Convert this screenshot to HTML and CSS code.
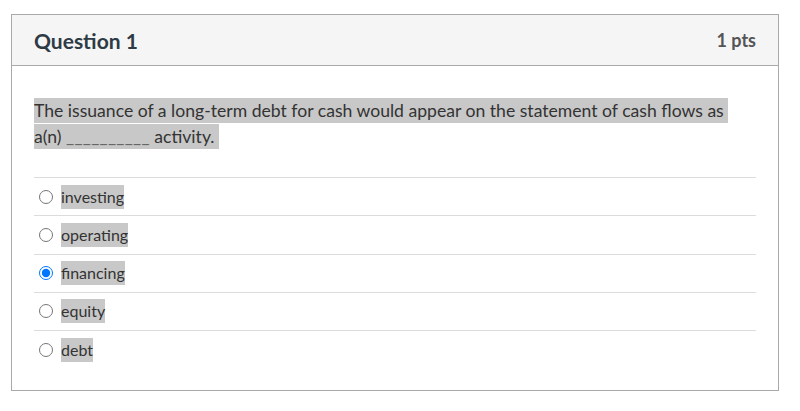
FILE: index.html
```html
<!DOCTYPE html>
<html lang="en">
<head>
    <link rel="stylesheet" href="styles.css">
    <meta charset="UTF-8">
    <meta name="viewport" content="width=device-width, initial-scale=1.0">
    <title>Quiz - Question 1</title>
</head>
<body>
    <div class="question">
        <div class="question_header">
            <h2 class="question_name">Question 1</h2>
            <span class="question_points">1 pts</span>
        </div>
        <div class="question_body">
            <p class="question_text"><span class="hl">The issuance of a long-term debt for cash would appear on the statement of cash flows as&nbsp;</span><br><span class="hl">a(n) <span class="blank">__________</span> activity.&nbsp;</span></p>
            <ul class="answers">
                <li class="answer"><input type="radio" name="q1" id="a1"><label for="a1"><span class="hl">investing </span></label></li>
                <li class="answer"><input type="radio" name="q1" id="a2"><label for="a2"><span class="hl">operating </span></label></li>
                <li class="answer"><input type="radio" name="q1" id="a3" checked><label for="a3"><span class="hl">financing </span></label></li>
                <li class="answer"><input type="radio" name="q1" id="a4"><label for="a4"><span class="hl">equity </span></label></li>
                <li class="answer"><input type="radio" name="q1" id="a5"><label for="a5"><span class="hl">debt</span></label></li>
            </ul>
        </div>
    </div>
</body>
</html>
```

FILE: styles.css
```css
body {
    margin: 0;
    padding: 0;
    background: #fff;
    font-family: Lato, "Noto Sans", sans-serif;
    color: #2d3b45;
}
.question {
    box-sizing: border-box;
    width: 768px;
    margin: 14px 0 0 11px;
    border: 1px solid #a9a9a9;
}
.question_header {
    height: 50px;
    padding: 0 22px;
    display: flex;
    align-items: center;
    justify-content: space-between;
    background-color: #f5f5f5;
    border-bottom: 1px solid #a9a9a9;
}
.question_name {
    margin: 0;
    font-size: 21px;
    font-weight: 700;
    color: #2d3b45;
}
.question_points {
    font-size: 18px;
    font-weight: 700;
    color: #555;
}
.question_body {
    padding: 32px 22px 22px 22px;
}
.question_text {
    margin: 0;
    font-size: 17.6px;
    line-height: 26px;
    color: #333;
}
.hl {
    background-color: #c8c8c8;
    padding: 2.45px 0;
}
.question_text .blank {
    color: #666;
    letter-spacing: 0.3px;
}
.answers {
    list-style: none;
    margin: 27px 0 0 0;
    padding: 0;
}
.answer {
    height: 37.25px;
    display: flex;
    align-items: center;
    border-top: 1px solid #dcdcdc;
    font-size: 16px;
    color: #333;
}
.answer input {
    margin: 0 8px 0 5px;
    width: 14px;
    height: 14px;
}
.answer .hl {
    padding: 2.4px 0;
}
```
